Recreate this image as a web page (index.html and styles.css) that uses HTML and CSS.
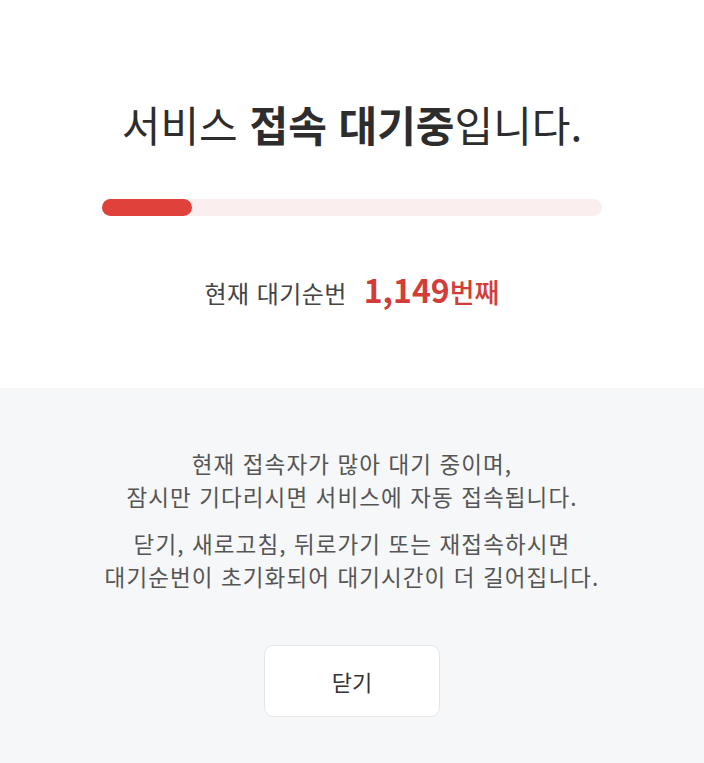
FILE: index.html
```html
<!DOCTYPE html>
<html lang="ko">
	<head>
		<meta charset="utf-8">
		<title>서비스 접속 대기중</title>
		<link rel="stylesheet" href="styles.css">
	</head>
	<body>
		<div class="wait">
			<div class="top">
				<h1 class="title">서비스 <b>접속 대기중</b>입니다.</h1>
				<div class="bar"><div class="fill" style="width: 18%"></div></div>
				<p class="order">현재 대기순번 <strong>1,149<span>번째</span></strong></p>
			</div>
			<div class="bottom">
				<p class="info">현재 접속자가 많아 대기 중이며,<br>잠시만 기다리시면 서비스에 자동 접속됩니다.</p>
				<p class="info">닫기, 새로고침, 뒤로가기 또는 재접속하시면<br>대기순번이 초기화되어 대기시간이 더 길어집니다.</p>
				<button class="close">닫기</button>
			</div>
		</div>
	</body>
</html>
```

FILE: styles.css
```css
* {
  padding: 0;
  margin: 0;
  box-sizing: border-box;
}

body {
  font-family: "Noto Sans CJK KR", "Noto Sans", sans-serif;
  color: #333;
  background: #f5f7f8;
}

.wait {
  display: flex;
  flex-direction: column;
  min-height: 763px;
}

.top {
  background: #fff;
  padding: 96px 102px 0;
  height: 388px;
  display: flex;
  flex-direction: column;
  align-items: center;
}

.title {
  font-size: 42px;
  font-weight: 400;
  color: #2d2d2d;
  line-height: 56px;
}

.title b {
  font-weight: 700;
}

.bar {
  width: 100%;
  height: 17px;
  margin-top: 47px;
  border-radius: 9px;
  background: #fbeeee;
}

.fill {
  height: 100%;
  border-radius: 9px;
  background: #e0413b;
}

.order {
  margin-top: 50px;
  font-size: 24px;
  letter-spacing: 0.4px;
  color: #444;
}

.order strong {
  margin-left: 10px;
  font-size: 32px;
  font-weight: 700;
  letter-spacing: 0;
  color: #d23d3a;
}

.order strong span {
  font-size: 27px;
  font-weight: 500;
}

.bottom {
  flex: 1;
  padding-top: 59px;
  display: flex;
  flex-direction: column;
  align-items: center;
  text-align: center;
}

.info {
  font-size: 22.5px;
  letter-spacing: 1.1px;
  line-height: 33px;
  color: #555;
  margin-bottom: 14px;
}

.close {
  margin-top: 38px;
  width: 176px;
  height: 72px;
  font-family: inherit;
  font-size: 22px;
  color: #333;
  background: #fff;
  border: 1px solid #e4e6e8;
  border-radius: 9px;
}
```
